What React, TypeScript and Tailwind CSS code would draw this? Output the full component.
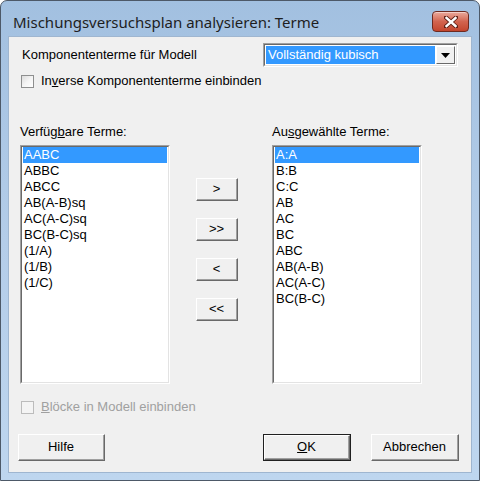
import React from "react";

const font = { fontFamily: '"Liberation Sans", Arial, sans-serif' };

const availableTerms = ["AABC", "ABBC", "ABCC", "AB(A-B)sq", "AC(A-C)sq", "BC(B-C)sq", "(1/A)", "(1/B)", "(1/C)"];
const selectedTerms = ["A:A", "B:B", "C:C", "AB", "AC", "BC", "ABC", "AB(A-B)", "AC(A-C)", "BC(B-C)"];

function CloseButton() {
  return (
    <div className="w-[37px] h-[21px] rounded-[4px] border border-[#6e2a20] bg-gradient-to-b from-[#e9a99c] via-[#d2644f] to-[#c3452d] flex items-center justify-center shadow-[inset_0_1px_0_rgba(255,255,255,0.45)]">
      <svg width="14" height="12" viewBox="0 0 14 12">
        <path d="M2 1.5 L12 10.5 M12 1.5 L2 10.5" stroke="#5a1e14" strokeWidth="4.2" strokeLinecap="square" />
        <path d="M2.5 2 L11.5 10 M11.5 2 L2.5 10" stroke="#ffffff" strokeWidth="2.4" strokeLinecap="square" />
      </svg>
    </div>
  );
}

function CheckBox({ disabled }: { disabled?: boolean }) {
  return (
    <div
      className={
        disabled
          ? "w-[13px] h-[13px] border border-[#bcbcbc] bg-[#f4f4f4] shrink-0"
          : "w-[13px] h-[13px] border border-[#8e8f8f] bg-gradient-to-br from-[#dcdcdc] via-[#f4f4f4] to-white shrink-0"
      }
    />
  );
}

function WinButton({ children, width, isDefault }: { children: React.ReactNode; width: string; isDefault?: boolean }) {
  return (
    <div className={`${width} ${isDefault ? "border border-[#202020]" : ""} shrink-0`}>
      <div className="h-full border-t border-l border-white border-r border-b border-r-[#696969] border-b-[#696969] bg-[#f0f0f0]">
        <div className="h-full border-r border-b border-r-[#a0a0a0] border-b-[#a0a0a0] flex items-center justify-center text-[13px] text-black">
          {children}
        </div>
      </div>
    </div>
  );
}

function ListBox({ items }: { items: string[] }) {
  return (
    <div className="w-[150px] h-[239px] border border-t-[#a0a0a0] border-l-[#a0a0a0] border-r-white border-b-white shrink-0">
      <div className="h-full border border-t-[#696969] border-l-[#696969] border-r-[#e3e3e3] border-b-[#e3e3e3] bg-white px-[1px]">
        {items.map((t, i) => (
          <div
            key={t}
            className={`h-[16px] leading-[16px] pl-[1px] text-[13px] ${i === 0 ? "bg-[#3399ff] text-white" : "text-black"}`}
          >
            {t}
          </div>
        ))}
      </div>
    </div>
  );
}

export default function App() {
  return (
    <div className="w-[480px] h-[481px] bg-white" style={font}>
      <div className="w-[480px] h-[481px] rounded-t-[7px] border border-[#4d5968] bg-gradient-to-b from-[#a2c0e0] via-[#b4cde9] to-[#bed6ef] flex flex-col">
        {/* Title bar */}
        <div className="h-[35px] shrink-0 flex items-start justify-between pl-[12px] pr-[10px]">
          <span className="mt-[11px] text-[15px] leading-[20px] text-[#1e1e1e]" style={{ fontFamily: '"Noto Sans", "Open Sans", sans-serif' }}>
            Mischungsversuchsplan analysieren: Terme
          </span>
          <div className="mt-[10px]">
            <CloseButton />
          </div>
        </div>

        {/* Client area */}
        <div className="mx-[7px] mb-[7px] flex-1 bg-[#f0f0f0] border border-[#9fb6d0] text-[13px] text-black flex flex-col pl-[11px]">
          <div className="flex items-center mt-[6px] h-[24px]">
            <span className="ml-[2px] w-[241px]">Komponententerme für Modell</span>
            <div className="w-[195px] h-[24px] border border-t-[#a0a0a0] border-l-[#a0a0a0] border-r-white border-b-white">
              <div className="h-full border border-t-[#696969] border-l-[#696969] border-r-[#e3e3e3] border-b-[#e3e3e3] bg-white flex p-[1px]">
                <div className="flex-1 bg-[#3399ff] text-white pl-[2px] leading-[18px]">Vollständig kubisch</div>
                <div className="w-[19px] ml-[1px] border-t border-l border-white border-r border-b border-r-[#696969] border-b-[#696969] bg-[#f0f0f0] flex items-center justify-center">
                  <svg width="9" height="5" viewBox="0 0 9 5">
                    <path d="M0 0 H9 L4.5 5 Z" fill="#000" />
                  </svg>
                </div>
              </div>
            </div>
          </div>

          <div className="flex items-center gap-[7px] mt-[7px] ml-[1px] h-[14px]">
            <CheckBox />
            <span>
              In<span className="underline">v</span>erse Komponententerme einbinden
            </span>
          </div>

          <div className="flex mt-[36px] h-[16px] leading-[16px]">
            <span className="w-[252px]">
              Verfüg<span className="underline">b</span>are Terme:
            </span>
            <span>
              Au<span className="underline">s</span>gewählte Terme:
            </span>
          </div>

          <div className="flex mt-[5px]">
            <ListBox items={availableTerms} />
            <div className="w-[102px] flex flex-col items-start pl-[26px] pt-[33px] gap-[17px]">
              <WinButton width="w-[42px] h-[23px]">&gt;</WinButton>
              <WinButton width="w-[42px] h-[23px]">&gt;&gt;</WinButton>
              <WinButton width="w-[42px] h-[23px]">&lt;</WinButton>
              <WinButton width="w-[42px] h-[23px]">&lt;&lt;</WinButton>
            </div>
            <ListBox items={selectedTerms} />
          </div>

          <div className="flex items-center gap-[7px] mt-[16px] ml-[1px] h-[14px] text-[#a0a0a0]">
            <CheckBox disabled />
            <span>
              <span className="underline">B</span>löcke in Modell einbinden
            </span>
          </div>

          <div className="flex mt-[20px] h-[27px] -ml-[2px]">
            <WinButton width="w-[87px] h-[27px]">Hilfe</WinButton>
            <div className="w-[158px]" />
            <WinButton width="w-[88px] h-[27px]" isDefault>
              <span className="underline">O</span>K
            </WinButton>
            <div className="w-[20px]" />
            <WinButton width="w-[88px] h-[27px]">Abbrechen</WinButton>
          </div>
        </div>
      </div>
    </div>
  );
}
